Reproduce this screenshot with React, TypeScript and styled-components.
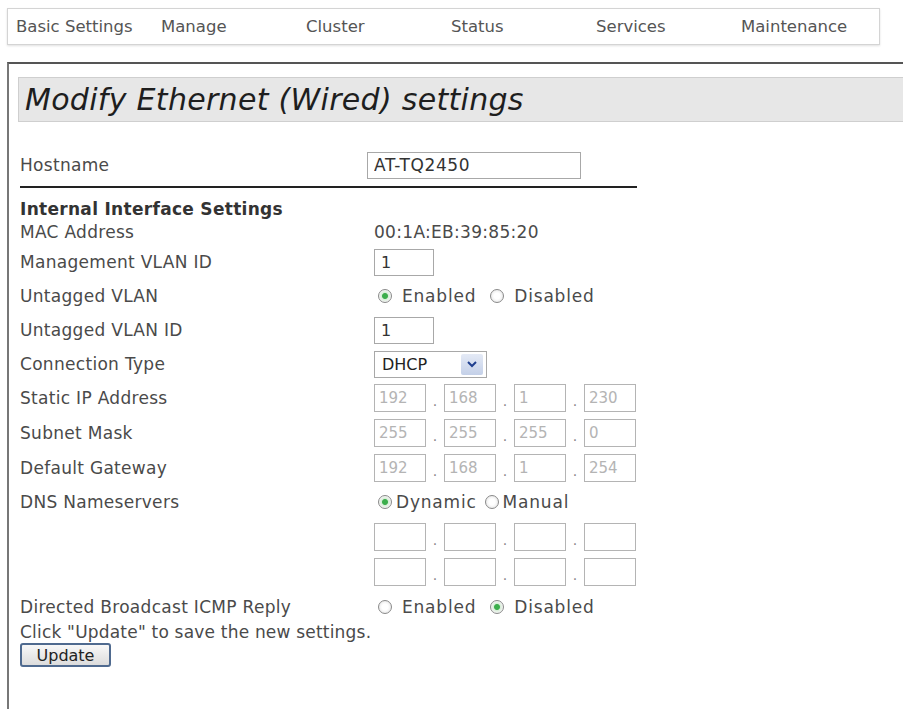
import React from "react";
import styled, { createGlobalStyle } from "styled-components";

const GlobalStyle = createGlobalStyle`
  html, body {
    margin: 0;
    padding: 0;
    background: #ffffff;
  }
  body {
    font-family: "DejaVu Sans", Verdana, sans-serif;
    color: #4a4a4a;
    overflow: hidden;
  }
`;

const Page = styled.div`
  width: 903px;
  height: 709px;
  overflow: hidden;
  padding-top: 8px;
  box-sizing: border-box;
`;

const NavBar = styled.nav`
  margin-left: 7px;
  width: 873px;
  height: 37px;
  box-sizing: border-box;
  border: 1px solid #d4d4d4;
  box-shadow: 0 1px 2px rgba(0, 0, 0, 0.12);
  display: grid;
  grid-template-columns: repeat(6, 145px);
  align-items: center;
  padding-left: 8px;
`;

const NavItem = styled.a`
  font-size: 16.5px;
  color: #555;
  text-decoration: none;
  white-space: nowrap;
`;

const Panel = styled.section`
  margin-top: 17px;
  margin-left: 7px;
  border-top: 2px solid #555;
  border-left: 2px solid #777;
  padding: 13px 0 0 9px;
  height: 640px;
`;

const TitleBar = styled.h1`
  margin: 0;
  height: 45px;
  box-sizing: border-box;
  background: #e7e7e7;
  border: 1px solid #cfcfcf;
  border-right: none;
  font-size: 30px;
  font-weight: normal;
  font-style: italic;
  color: #1e1e1e;
  display: flex;
  align-items: center;
  padding-left: 6px;
  letter-spacing: 0.3px;
`;

const Form = styled.form`
  width: 617px;
  margin-left: 2px;
`;

const Row = styled.div<{ h?: number; mt?: number }>`
  display: flex;
  align-items: center;
  height: ${(p) => p.h ?? 34}px;
  margin-top: ${(p) => p.mt ?? 0}px;
`;

const Label = styled.span`
  width: 354px;
  flex: none;
  font-size: 17px;
  letter-spacing: 0.3px;
  color: #4a4a4a;
`;

const Value = styled.span`
  font-size: 17px;
  letter-spacing: 0.3px;
  color: #4a4a4a;
`;

const Separator = styled.hr`
  margin: 2px 0 0;
  border: none;
  height: 2px;
  background: #222;
`;

const Heading = styled.h2`
  margin: 11px 0 0;
  height: 20px;
  font-size: 17px;
  letter-spacing: 0.3px;
  font-weight: bold;
  color: #333;
  line-height: 20px;
`;

const TextInput = styled.input<{ w: number; shift?: number; big?: boolean }>`
  width: ${(p) => p.w}px;
  height: 27px;
  box-sizing: border-box;
  border: 1px solid #a8a8a8;
  font-family: inherit;
  font-size: ${(p) => (p.big ? 17 : 16)}px;
  letter-spacing: ${(p) => (p.big ? 0.6 : 0.3)}px;
  color: #333;
  padding: 0 6px;
  outline: none;
  background: #fff;
  margin: 0 0 0 ${(p) => p.shift ?? 0}px;
`;

const Octets = styled.div`
  display: flex;
  align-items: center;
`;

const Octet = styled.input`
  width: 52px;
  height: 28px;
  box-sizing: border-box;
  border: 1px solid #b4b4b4;
  font-family: inherit;
  font-size: 15px;
  color: #b4b4b4;
  padding: 0 4px;
  outline: none;
  background: #fff;
  margin: 0;
`;

const Dot = styled.span`
  width: 18px;
  text-align: center;
  font-size: 14px;
  color: #888;
  padding-top: 6px;
`;

const SelectBox = styled.div`
  width: 113px;
  height: 27px;
  box-sizing: border-box;
  border: 1px solid #a8a8a8;
  display: flex;
  align-items: center;
  justify-content: space-between;
  padding: 0 3px 0 7px;
  font-size: 16px;
  color: #222;
`;

const ArrowButton = styled.span`
  width: 22px;
  height: 21px;
  background: linear-gradient(#e4eaf6, #c4d0e8);
  border-radius: 2px;
  display: flex;
  align-items: center;
  justify-content: center;
`;

const RadioGroup = styled.div<{ gap?: number }>`
  display: flex;
  align-items: center;
  gap: ${(p) => p.gap ?? 8}px;
  padding-left: 4px;
`;

const RadioOption = styled.label<{ tight?: boolean }>`
  display: flex;
  align-items: center;
  gap: ${(p) => (p.tight ? 4 : 10)}px;
  font-size: 17px;
  letter-spacing: 0.8px;
  color: #4a4a4a;
`;

const RadioCircle = styled.span<{ checked?: boolean }>`
  width: 14px;
  height: 14px;
  box-sizing: border-box;
  border-radius: 50%;
  border: 1px solid #8a8a8a;
  background: ${(p) =>
    p.checked
      ? "radial-gradient(circle, #3cae4c 0 2.5px, #d8eed8 3.5px, #f4f4f4 6px)"
      : "radial-gradient(circle, #fff 0 3px, #e6e6e6 7px)"};
  flex: none;
`;

const Note = styled.p`
  margin: 0;
  height: 20px;
  line-height: 20px;
  font-size: 17px;
  letter-spacing: 0.2px;
  color: #4a4a4a;
`;

const UpdateButton = styled.button`
  margin-top: 1px;
  width: 91px;
  height: 24px;
  box-sizing: border-box;
  border: 2px solid #4f6a8f;
  border-radius: 3px;
  background: linear-gradient(#f8f8f8, #dcdcdc);
  font-family: inherit;
  font-size: 16px;
  color: #222;
  padding: 0;
`;

type RadioProps = { options: string[]; selected: number; tight?: boolean };

const Radios: React.FC<RadioProps> = ({ options, selected, tight }) => (
  <RadioGroup gap={tight ? 8 : 14}>
    {options.map((o, i) => (
      <RadioOption key={o} tight={tight}>
        <RadioCircle checked={i === selected} />
        {o}
      </RadioOption>
    ))}
  </RadioGroup>
);

const IpFields: React.FC<{ values?: string[] }> = ({ values }) => (
  <Octets>
    {[0, 1, 2, 3].map((i) => (
      <React.Fragment key={i}>
        {i > 0 && <Dot>.</Dot>}
        <Octet readOnly value={values ? values[i] : ""} />
      </React.Fragment>
    ))}
  </Octets>
);

const navItems = ["Basic Settings", "Manage", "Cluster", "Status", "Services", "Maintenance"];

export default function App() {
  return (
    <Page>
      <GlobalStyle />
      <NavBar>
        {navItems.map((n) => (
          <NavItem key={n}>{n}</NavItem>
        ))}
      </NavBar>
      <Panel>
        <TitleBar>Modify Ethernet (Wired) settings</TitleBar>
        <Form onSubmit={(e) => e.preventDefault()}>
          <Row h={38} mt={24}>
            <Label>Hostname</Label>
            <TextInput w={214} shift={-7} big readOnly value="AT-TQ2450" />
          </Row>
          <Separator />
          <Heading>Internal Interface Settings</Heading>
          <Row h={26}>
            <Label>MAC Address</Label>
            <Value>00:1A:EB:39:85:20</Value>
          </Row>
          <Row>
            <Label>Management VLAN ID</Label>
            <TextInput w={60} readOnly value="1" />
          </Row>
          <Row>
            <Label>Untagged VLAN</Label>
            <Radios options={["Enabled", "Disabled"]} selected={0} />
          </Row>
          <Row>
            <Label>Untagged VLAN ID</Label>
            <TextInput w={60} readOnly value="1" />
          </Row>
          <Row>
            <Label>Connection Type</Label>
            <SelectBox>
              DHCP
              <ArrowButton>
                <svg width="10" height="8" viewBox="0 0 10 8">
                  <path d="M1 2 L5 6 L9 2" fill="none" stroke="#1f3f8f" strokeWidth="2" />
                </svg>
              </ArrowButton>
            </SelectBox>
          </Row>
          <Row>
            <Label>Static IP Address</Label>
            <IpFields values={["192", "168", "1", "230"]} />
          </Row>
          <Row h={35}>
            <Label>Subnet Mask</Label>
            <IpFields values={["255", "255", "255", "0"]} />
          </Row>
          <Row h={35}>
            <Label>Default Gateway</Label>
            <IpFields values={["192", "168", "1", "254"]} />
          </Row>
          <Row>
            <Label>DNS Nameservers</Label>
            <Radios options={["Dynamic", "Manual"]} selected={0} tight />
          </Row>
          <Row h={35}>
            <Label />
            <IpFields />
          </Row>
          <Row h={35}>
            <Label />
            <IpFields />
          </Row>
          <Row h={30} mt={3}>
            <Label>Directed Broadcast ICMP Reply</Label>
            <Radios options={["Enabled", "Disabled"]} selected={1} />
          </Row>
          <Note>Click "Update" to save the new settings.</Note>
          <UpdateButton type="submit">Update</UpdateButton>
        </Form>
      </Panel>
    </Page>
  );
}
